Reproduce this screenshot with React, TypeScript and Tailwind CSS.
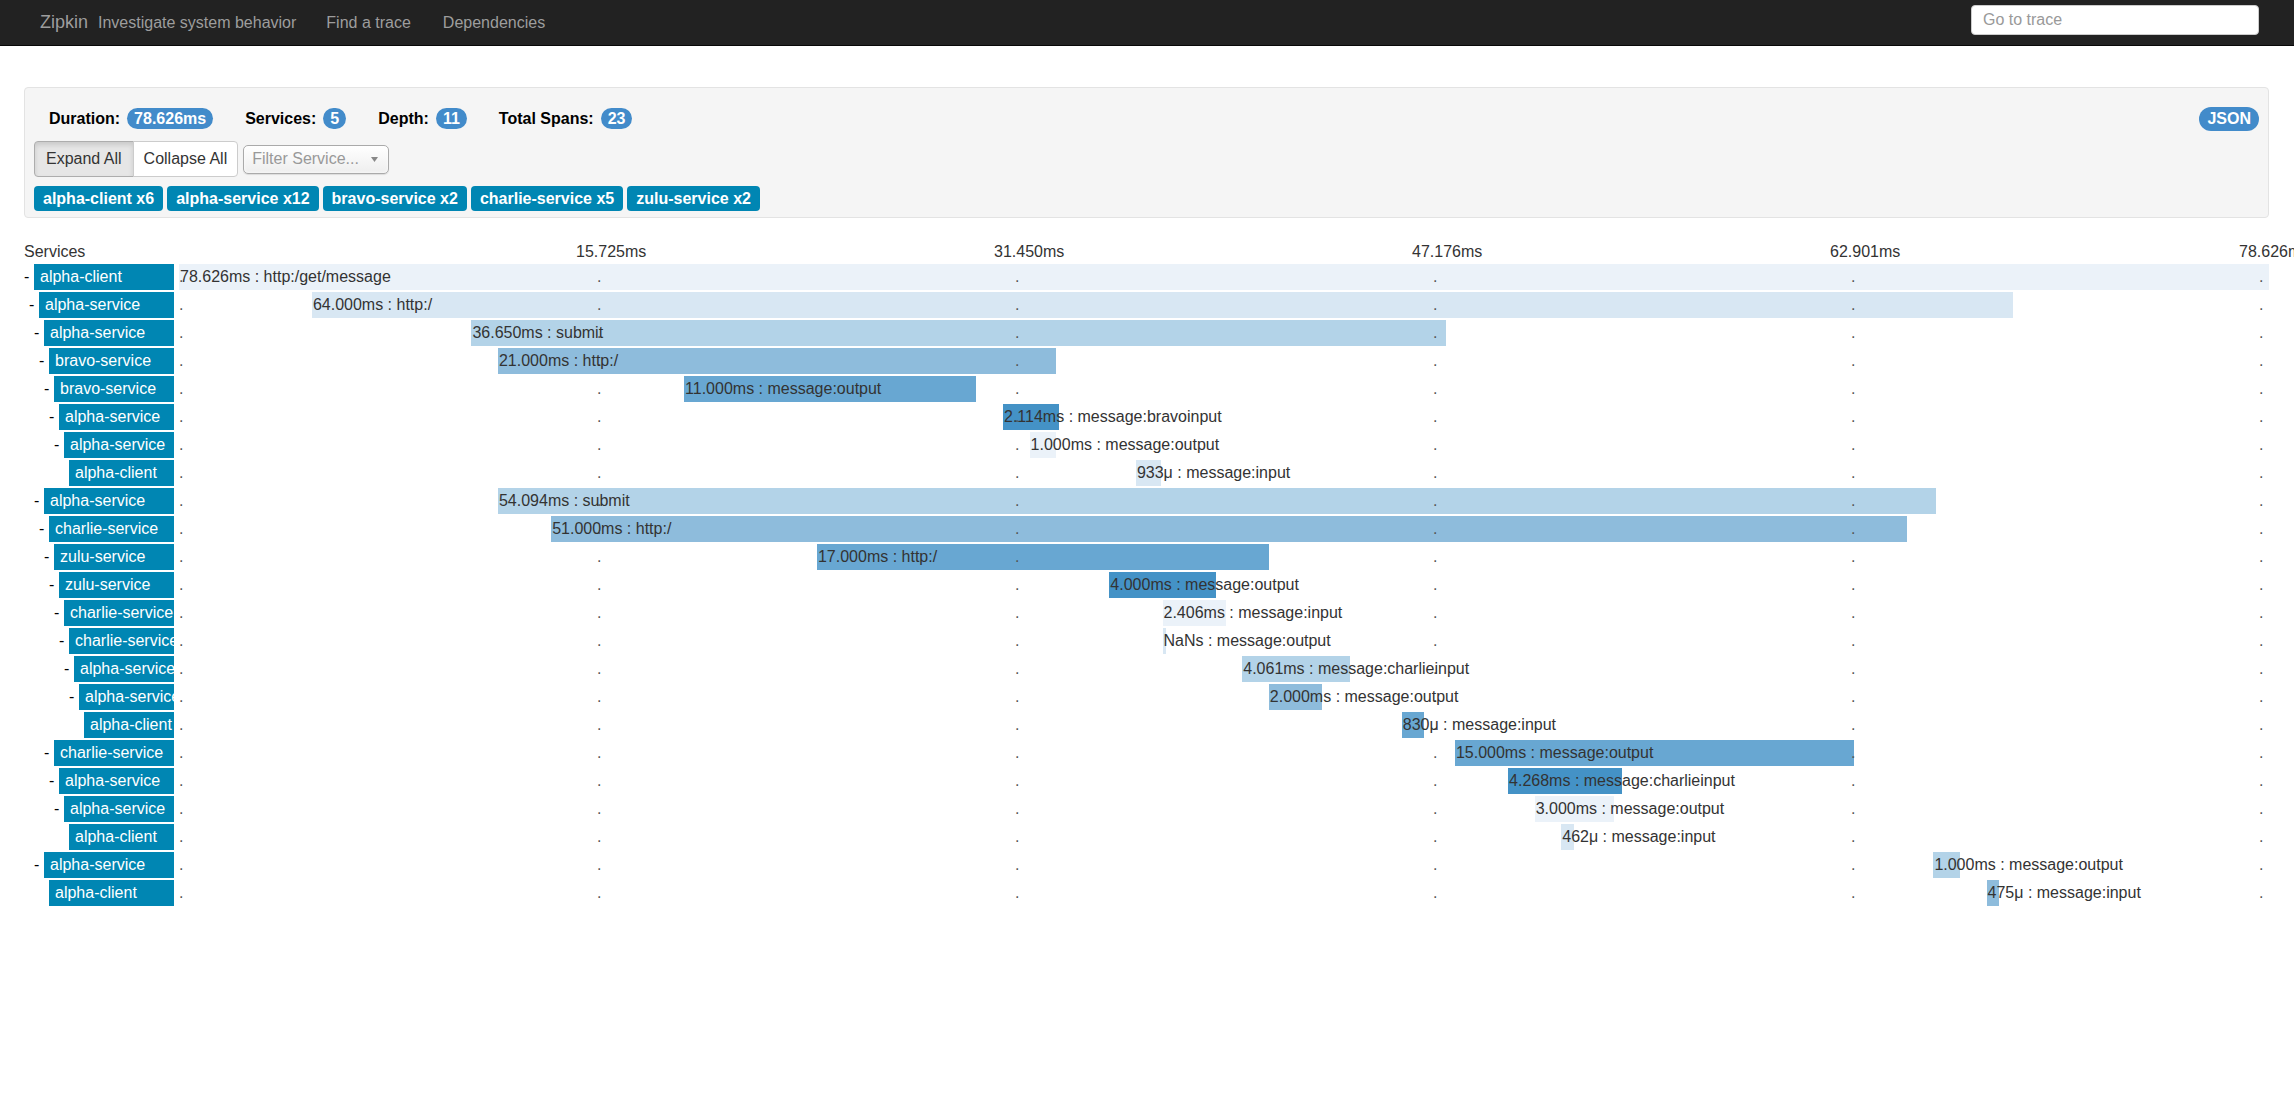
import React from "react";

const TOTAL = 78.626;

type Row = {
  svc: string;
  d: number;
  start: number;
  dur: number;
  label: string;
  leaf?: boolean;
};

const rows: Row[] = [
  { svc: "alpha-client", d: 0, start: 0, dur: 78.626, label: "78.626ms : http:/get/message" },
  { svc: "alpha-service", d: 1, start: 5, dur: 64, label: "64.000ms : http:/" },
  { svc: "alpha-service", d: 2, start: 11, dur: 36.65, label: "36.650ms : submit" },
  { svc: "bravo-service", d: 3, start: 12, dur: 21, label: "21.000ms : http:/" },
  { svc: "bravo-service", d: 4, start: 19, dur: 11, label: "11.000ms : message:output" },
  { svc: "alpha-service", d: 5, start: 31, dur: 2.114, label: "2.114ms : message:bravoinput" },
  { svc: "alpha-service", d: 6, start: 32, dur: 1, label: "1.000ms : message:output" },
  { svc: "alpha-client", d: 7, start: 36, dur: 0.933, label: "933μ : message:input", leaf: true },
  { svc: "alpha-service", d: 2, start: 12, dur: 54.094, label: "54.094ms : submit" },
  { svc: "charlie-service", d: 3, start: 14, dur: 51, label: "51.000ms : http:/" },
  { svc: "zulu-service", d: 4, start: 24, dur: 17, label: "17.000ms : http:/" },
  { svc: "zulu-service", d: 5, start: 35, dur: 4, label: "4.000ms : message:output" },
  { svc: "charlie-service", d: 6, start: 37, dur: 2.406, label: "2.406ms : message:input" },
  { svc: "charlie-service", d: 7, start: 37, dur: 0.12, label: "NaNs : message:output" },
  { svc: "alpha-service", d: 8, start: 40, dur: 4.061, label: "4.061ms : message:charlieinput" },
  { svc: "alpha-service", d: 9, start: 41, dur: 2, label: "2.000ms : message:output" },
  { svc: "alpha-client", d: 10, start: 46, dur: 0.83, label: "830μ : message:input", leaf: true },
  { svc: "charlie-service", d: 4, start: 48, dur: 15, label: "15.000ms : message:output" },
  { svc: "alpha-service", d: 5, start: 50, dur: 4.268, label: "4.268ms : message:charlieinput" },
  { svc: "alpha-service", d: 6, start: 51, dur: 3, label: "3.000ms : message:output" },
  { svc: "alpha-client", d: 7, start: 52, dur: 0.462, label: "462μ : message:input", leaf: true },
  { svc: "alpha-service", d: 2, start: 66, dur: 1, label: "1.000ms : message:output" },
  { svc: "alpha-client", d: 3, start: 68, dur: 0.475, label: "475μ : message:input", leaf: true },
];

const barColors = ["bg-[#ebf2f9]", "bg-[#d8e7f3]", "bg-[#b3d3e8]", "bg-[#8ebcdc]", "bg-[#68a7d2]", "bg-[#4492c6]"];

const dotClasses = [
  "left-0",
  "left-[20%]",
  "left-[40%]",
  "left-[60%]",
  "left-[80%]",
  "left-[calc(100%-10px)]",
];

const tickLabels = [
  { t: "15.725ms", c: "left-[calc(20%-21px)]" },
  { t: "31.450ms", c: "left-[calc(40%-21px)]" },
  { t: "47.176ms", c: "left-[calc(60%-21px)]" },
  { t: "62.901ms", c: "left-[calc(80%-21px)]" },
  { t: "78.626ms", c: "left-[calc(100%-30px)]" },
];

const serviceBadges = ["alpha-client x6", "alpha-service x12", "bravo-service x2", "charlie-service x5", "zulu-service x2"];

function Badge({ children }: { children: React.ReactNode }) {
  return (
    <span className="inline-flex h-[21px] items-center rounded-full bg-[#428bca] px-[7px] font-bold text-white leading-none">
      {children}
    </span>
  );
}

function Stat({ label, value }: { label: string; value: string }) {
  return (
    <div className="flex items-center gap-[7px]">
      <span className="font-bold text-black">{label}</span>
      <Badge>{value}</Badge>
    </div>
  );
}

export default function App() {
  return (
    <div
      className="relative w-full overflow-hidden bg-white text-[16px] text-[#333] pb-[40px]"
      style={{ fontFamily: '"Liberation Sans", Arial, Helvetica, sans-serif' }}
    >
      {/* Navbar */}
      <nav className="flex h-[46px] items-start border-b border-[#080808] bg-[#222222]">
        <div className="flex h-[45px] items-center">
          <span className="ml-[40px] text-[18px] text-[#9d9d9d]">Zipkin</span>
          <span className="ml-[10px] text-[#9d9d9d]">Investigate system behavior</span>
          <a className="ml-[30px] text-[#9d9d9d]">Find a trace</a>
          <a className="ml-[32px] text-[#9d9d9d]">Dependencies</a>
        </div>
        <input
          placeholder="Go to trace"
          className="ml-auto mr-[35px] mt-[5px] h-[30px] w-[288px] rounded-[4px] border border-[#ccc] bg-white px-[11px] text-[16px] text-[#555] outline-none placeholder:text-[#999]"
        />
      </nav>

      <div className="pl-[24px] pr-[25px]">
        {/* Well panel */}
        <div className="mt-[41px] rounded-[4px] border border-[#e3e3e3] bg-[#f5f5f5] px-[9px] pt-[20px] pb-[6px]">
          <div className="flex h-[21px] items-center pl-[15px]">
            <div className="flex items-center gap-[32px]">
              <Stat label="Duration:" value="78.626ms" />
              <Stat label="Services:" value="5" />
              <Stat label="Depth:" value="11" />
              <Stat label="Total Spans:" value="23" />
            </div>
            <span className="ml-auto inline-flex h-[24px] items-center rounded-full bg-[#428bca] px-[8px] font-bold text-white">
              JSON
            </span>
          </div>

          <div className="mt-[12px] flex items-center">
            <div className="flex">
              <button className="h-[36px] rounded-l-[4px] border border-[#adadad] bg-[#e6e6e6] px-[11px] text-[#333] shadow-[inset_0_3px_5px_rgba(0,0,0,0.125)]">
                Expand All
              </button>
              <button className="-ml-px h-[36px] rounded-r-[4px] border border-[#ccc] bg-white px-[10px] text-[#333]">
                Collapse All
              </button>
            </div>
            <div className="ml-[5px] flex h-[29px] w-[146px] items-center rounded-[5px] border border-[#aaa] bg-gradient-to-b from-white to-[#eeeeee] pl-[8px] pr-[10px] shadow-[0_0_3px_white_inset,0_1px_1px_rgba(0,0,0,0.1)]">
              <span className="text-[#999] whitespace-nowrap">Filter Service...</span>
              <svg className="ml-auto" width="7" height="5" viewBox="0 0 7 5">
                <path d="M0 0 L7 0 L3.5 5 Z" fill="#888" />
              </svg>
            </div>
          </div>

          <div className="mt-[9px] flex gap-[4px]">
            {serviceBadges.map((b) => (
              <span
                key={b}
                className="inline-flex h-[25px] items-center rounded-[4px] bg-[#0086b3] px-[9px] font-bold text-white"
              >
                {b}
              </span>
            ))}
          </div>
        </div>

        {/* Trace header */}
        <div className="mt-[22px] flex h-[24px] leading-[24px]">
          <div className="w-[155px] shrink-0">Services</div>
          <div className="relative flex-1">
            {tickLabels.map((l) => (
              <span key={l.t} className={`absolute top-0 whitespace-nowrap ${l.c}`}>
                {l.t}
              </span>
            ))}
          </div>
        </div>

        {/* Rows */}
        <div className="flex flex-col gap-[2px]">
          {rows.map((r, i) => (
            <div key={i} className="flex h-[26px] leading-[26px]">
              <div className="flex w-[150px] shrink-0" style={{ paddingLeft: r.d * 5 }}>
                <span className="w-[10px] shrink-0 text-black">{r.leaf ? "" : "-"}</span>
                <div className="min-w-0 flex-1 overflow-hidden whitespace-nowrap bg-[#0086b3] pl-[6px] text-white">
                  {r.svc}
                </div>
              </div>
              <div className="relative ml-[5px] flex-1">
                <div
                  className={`absolute top-0 h-full ${barColors[r.d % 6]}`}
                  style={{
                    left: `${(r.start / TOTAL) * 100}%`,
                    width: `${(r.dur / TOTAL) * 100}%`,
                  }}
                />
                {dotClasses.map((c) => (
                  <span key={c} className={`absolute top-0 text-[#555] ${c}`}>
                    .
                  </span>
                ))}
                <span
                  className="absolute top-0 whitespace-nowrap pl-[1px] text-[#333]"
                  style={{ left: `${(r.start / TOTAL) * 100}%` }}
                >
                  {r.label}
                </span>
              </div>
            </div>
          ))}
        </div>
      </div>
    </div>
  );
}
